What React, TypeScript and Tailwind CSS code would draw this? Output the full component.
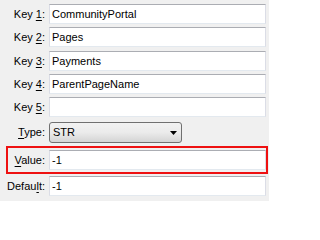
import React from 'react';

const font = { fontFamily: '"Liberation Sans", Arial, sans-serif' };

function Label({ pre, key_, post, className = '' }: { pre: string; key_: string; post: string; className?: string }) {
  return (
    <label className={`w-[45px] shrink-0 text-right text-[11px] leading-none text-black whitespace-nowrap ${className}`}>
      {pre}
      <span className="underline underline-offset-[2px]">{key_}</span>
      {post}
    </label>
  );
}

function Field({ value, className = '' }: { value: string; className?: string }) {
  return (
    <div
      className={`ml-[4px] flex h-[20px] flex-1 items-center border border-t-[#abadb3] border-x-[#dbdde6] border-b-[#e3e9ef] bg-white pl-[2px] text-[11px] text-black ${className}`}
    >
      {value}
    </div>
  );
}

function Row({ label, value, className = '' }: { label: [string, string, string]; value: string; className?: string }) {
  return (
    <div className={`flex items-center pr-[3px] ${className}`}>
      <Label pre={label[0]} key_={label[1]} post={label[2]} />
      <Field value={value} />
    </div>
  );
}

export default function App() {
  return (
    <div className="h-[201px] w-[269px] overflow-hidden bg-[#f0f0f0] pt-[4px]" style={font}>
      <Row label={['Key ', '1', ':']} value="CommunityPortal" />
      <Row label={['Key ', '2', ':']} value="Pages" className="mt-[3px]" />
      <Row label={['Key ', '3', ':']} value="Payments" className="mt-[4px]" />
      <Row label={['Key ', '4', ':']} value="ParentPageName" className="mt-[3px]" />
      <Row label={['Key ', '5', ':']} value="" className="mt-[3px]" />

      <div className="mt-[5px] flex items-center">
        <Label pre="" key_="T" post="ype:" />
        <div className="ml-[4px] flex h-[21px] w-[133px] items-center justify-between rounded-[3px] border border-[#707070] bg-gradient-to-b from-[#f2f2f2] via-[#ebebeb] to-[#d4d4d4] pl-[3px] pr-[4px] text-[11px] text-black">
          <span>STR</span>
          <svg width="7" height="4" viewBox="0 0 7 4">
            <path d="M0 0h7L3.5 4z" fill="#000" />
          </svg>
        </div>
      </div>

      <div className="relative mt-[7px]">
        <Row label={['', 'V', 'alue:']} value="-1" />
        <div className="pointer-events-none absolute left-[6px] right-[1px] top-[-4px] h-[28px] border-2 border-[#ee1111]" />
      </div>

      <Row label={['Defau', 'l', 't:']} value="-1" className="mt-[6px]" />
    </div>
  );
}
